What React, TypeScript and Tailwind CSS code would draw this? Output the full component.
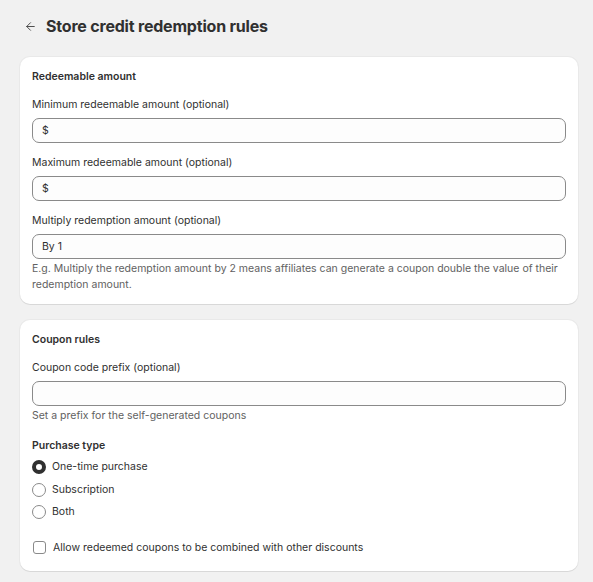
import { ArrowLeft } from "lucide-react";

function Field({ label, prefix, help }: { label: string; prefix?: string; help?: React.ReactNode }) {
  return (
    <div className="mt-3">
      <div className="text-[10.5px] leading-4 text-[#303030]">{label}</div>
      <div className="mt-[5px] h-[25px] rounded-[7px] border border-[#8a8a8a] bg-[#fdfdfd] px-[9px] flex items-center text-[10.5px] text-[#303030]">
        {prefix}
      </div>
      {help && <div className="mt-[2px] text-[10.5px] leading-4 text-[#616161]">{help}</div>}
    </div>
  );
}

function Radio({ label, checked }: { label: string; checked?: boolean }) {
  return (
    <div className="flex items-center gap-[6px] h-[22.5px]">
      <span
        className={
          checked
            ? "w-[14px] h-[14px] rounded-full border-[4px] border-[#303030] bg-white"
            : "w-[14px] h-[14px] rounded-full border border-[#8a8a8a] bg-white"
        }
      />
      <span className="text-[10.5px] text-[#303030]">{label}</span>
    </div>
  );
}

export default function App() {
  return (
    <div className="min-h-[582px] bg-[#f1f1f1] pl-5 pr-[15px] pt-[15px] pb-3" style={{ fontFamily: "Inter, 'Noto Sans', sans-serif" }}>
      {/* Header */}
      <div className="flex items-center gap-[9px] h-[22px] pl-[4px]">
        <ArrowLeft size={13} strokeWidth={1.8} className="text-[#4a4a4a]" />
        <h1 className="text-[16px] font-bold text-[#303030] tracking-[-0.2px]">Store credit redemption rules</h1>
      </div>

      {/* Redeemable amount */}
      <div className="mt-[20px] rounded-[10px] bg-white px-3 pt-3 pb-[11px] shadow-[0_1px_0_rgba(0,0,0,0.07),0_0_0_1px_rgba(0,0,0,0.03)]">
        <div className="text-[10.5px] leading-4 font-semibold text-[#303030]">Redeemable amount</div>
        <Field label="Minimum redeemable amount (optional)" prefix="$" />
        <Field label="Maximum redeemable amount (optional)" prefix="$" />
        <Field
          label="Multiply redemption amount (optional)"
          prefix="By 1"
          help="E.g. Multiply the redemption amount by 2 means affiliates can generate a coupon double the value of their redemption amount."
        />
      </div>

      {/* Coupon rules */}
      <div className="mt-4 rounded-[10px] bg-white px-3 pt-3 pb-[16px] shadow-[0_1px_0_rgba(0,0,0,0.07),0_0_0_1px_rgba(0,0,0,0.03)]">
        <div className="text-[10.5px] leading-4 font-semibold text-[#303030]">Coupon rules</div>
        <Field label="Coupon code prefix (optional)" help="Set a prefix for the self-generated coupons" />
        <div className="mt-[14px] text-[10.5px] leading-4 font-semibold text-[#303030]">Purchase type</div>
        <div className="mt-[2px]">
          <Radio label="One-time purchase" checked />
          <Radio label="Subscription" />
          <Radio label="Both" />
        </div>
        <div className="mt-[16px] flex items-center gap-[7px] pl-[1px]">
          <span className="w-[13px] h-[13px] rounded-[3px] border border-[#8a8a8a] bg-white" />
          <span className="text-[10.5px] text-[#303030]">Allow redeemed coupons to be combined with other discounts</span>
        </div>
      </div>
    </div>
  );
}
